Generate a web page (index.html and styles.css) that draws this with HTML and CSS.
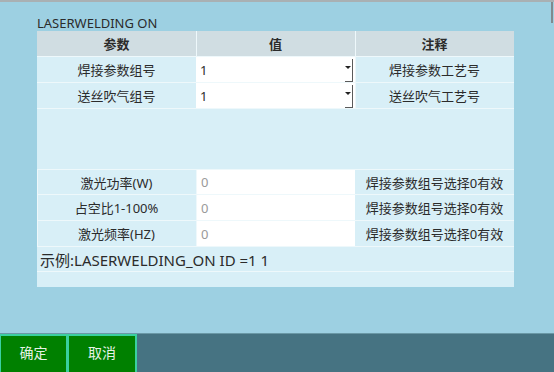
FILE: index.html
```html
<!DOCTYPE html>
<html lang="en">
<head>
    <meta charset="UTF-8">
    <title>LASERWELDING ON</title>
    <link rel="stylesheet" href="styles.css">
</head>
<body>
    <div class="screen">
        <div class="content">
            <div class="title">LASERWELDING&nbsp;ON</div>
            <div class="grid">
                <div class="cell head">参数</div>
                <div class="cell head">值</div>
                <div class="cell head">注释</div>

                <div class="cell">焊接参数组号</div>
                <div class="cell combo"><span>1</span><i class="drop"></i></div>
                <div class="cell">焊接参数工艺号</div>

                <div class="cell">送丝吹气组号</div>
                <div class="cell combo"><span>1</span><i class="drop"></i></div>
                <div class="cell">送丝吹气工艺号</div>

                <div class="cell wide"></div>

                <div class="cell">激光功率(W)</div>
                <div class="cell field">0</div>
                <div class="cell">焊接参数组号选择0有效</div>

                <div class="cell">占空比1-100%</div>
                <div class="cell field">0</div>
                <div class="cell">焊接参数组号选择0有效</div>

                <div class="cell">激光频率(HZ)</div>
                <div class="cell field">0</div>
                <div class="cell">焊接参数组号选择0有效</div>

                <div class="cell wide example">示例:LASERWELDING_ON ID =1 1</div>
                <div class="cell wide"></div>
            </div>
        </div>
        <div class="bar">
            <button class="btn">确定</button>
            <button class="btn">取消</button>
        </div>
        <div class="thumb"></div>
    </div>
</body>
</html>
```

FILE: styles.css
```css
body {
    margin: 0;
    font-family: "Noto Sans", "Noto Sans CJK SC", sans-serif;
    color: #2b2b2b;
}

.screen {
    position: relative;
    width: 554px;
    height: 372px;
    background-color: #9dd0e2;
    border-top: 2px solid #a9b0b3;
    box-sizing: border-box;
    display: flex;
    flex-direction: column;
}

.content {
    height: 331px;
    padding-left: 37px;
    padding-top: 14px;
    box-sizing: border-box;
}

.title {
    font-size: 13px;
    line-height: 15px;
    height: 15px;
}

.grid {
    width: 477px;
    display: grid;
    grid-template-columns: 159px 159px 159px;
    grid-template-rows: 25px 25px 25px 60px 24px 25px 25px 24px 15px;
    gap: 1px 0;
    background-color: #eef8fb;
}

.cell {
    background-color: #d8eff7;
    font-size: 13px;
    display: flex;
    align-items: center;
    justify-content: center;
    box-shadow: inset 1px 0 0 #eef8fb;
}

.cell:nth-child(3n+1) {
    box-shadow: none;
}

.head {
    background-color: #d0dde2;
    font-weight: bold;
}

.combo,
.field {
    background-color: #fff;
    justify-content: flex-start;
    padding-left: 4px;
    box-shadow: none;
}

.field {
    color: #9a9a9a;
    margin-left: 1px;
}

.combo {
    padding-right: 2px;
}

.combo span {
    flex: 1;
}

.drop {
    width: 7px;
    height: 22px;
    border-right: 1px solid #5a5a5a;
    border-bottom: 1px solid #5a5a5a;
    margin-top: 1px;
    display: flex;
    align-items: center;
}

.drop::before {
    content: "";
    border-left: 3px solid transparent;
    border-right: 3px solid transparent;
    border-top: 3px solid #222;
    margin-top: -4px;
}

.wide {
    grid-column: 1 / 4;
    box-shadow: none;
}

.example {
    justify-content: flex-start;
    padding-left: 3px;
    font-size: 15px;
}

.bar {
    flex: 1;
    background-color: #467382;
    border-top: 1px solid #6a98a6;
    display: flex;
}

.btn {
    width: 68px;
    height: 100%;
    margin: 0;
    padding: 0 0 4px;
    background-color: #008000;
    color: #e6f2e6;
    border: 2px solid #3ad0a0;
    border-left-width: 1px;
    border-bottom: none;
    font-family: "Noto Sans CJK SC", sans-serif;
    font-size: 14px;
}

.btn + .btn {
    width: 69px;
}

.thumb {
    position: absolute;
    right: 1px;
    top: 0;
    width: 2px;
    height: 21px;
    background-color: #7f8a8e;
}
```
